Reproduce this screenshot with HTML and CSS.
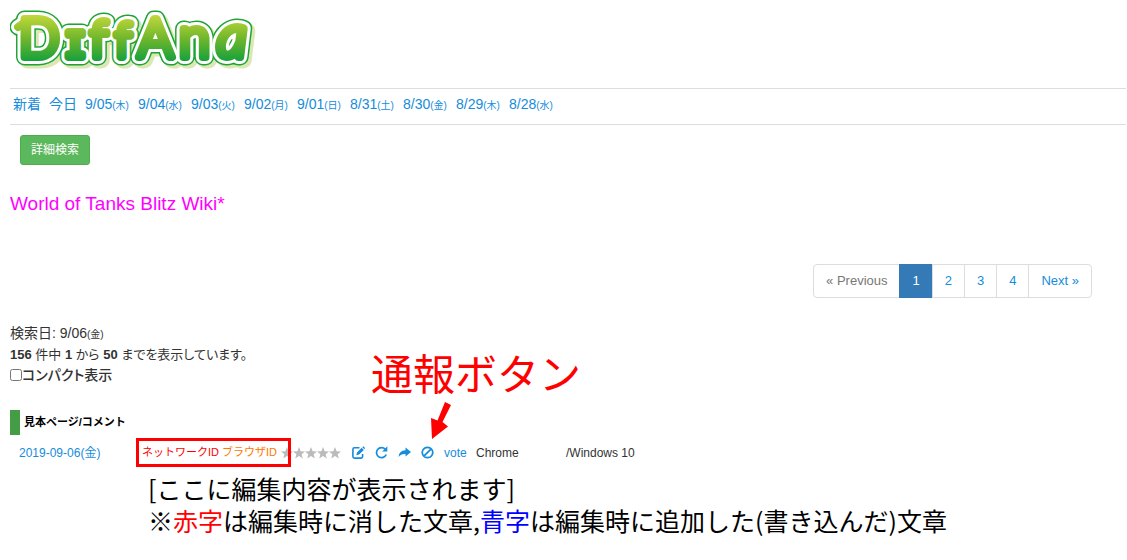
FILE: index.html
```html
<!DOCTYPE html>
<html lang="ja">
<head>
    <meta charset="UTF-8">
    <meta name="viewport" content="width=device-width, initial-scale=1.0">
    <title>DiffAna</title>
    <link rel="stylesheet" href="styles.css">
</head>
<body>
    <a class="logo" href="#">
        <svg width="262" height="70" viewBox="0 0 262 70" role="img" aria-label="DiffAna">
            <defs>
                <linearGradient id="leaf" gradientUnits="userSpaceOnUse" x1="0" y1="16" x2="0" y2="62">
                    <stop offset="0" stop-color="#bfd63a"/>
                    <stop offset="0.5" stop-color="#6fb62c"/>
                    <stop offset="1" stop-color="#12a03c"/>
                </linearGradient>
                <g id="word">
                    <path class="logo-flag" d="M18 27Q25 21 36 21 25 21 18 27z"/>
                    <text class="logo-text" y="57"><tspan class="l-d" x="19">D</tspan><tspan class="l-i" x="65">I</tspan><tspan class="l-f" x="90">f</tspan><tspan class="l-f2" x="115">f</tspan><tspan class="l-a" x="138">A</tspan><tspan class="l-n" x="179">n</tspan><tspan class="l-s" x="217">a</tspan></text>
                </g>
            </defs>
            <use class="logo-shadow" href="#word" x="3" y="3"/>
            <use class="logo-edge" href="#word"/>
            <use class="logo-white" href="#word"/>
            <use class="logo-fill" href="#word"/>
        </svg>
    </a>

    <nav class="days">
        <a href="#">新着</a>
        <a href="#">今日</a>
        <a class="day" href="#">9/05<small>(木)</small></a>
        <a class="day" href="#">9/04<small>(水)</small></a>
        <a class="day" href="#">9/03<small>(火)</small></a>
        <a class="day" href="#">9/02<small>(月)</small></a>
        <a class="day" href="#">9/01<small>(日)</small></a>
        <a class="day" href="#">8/31<small>(土)</small></a>
        <a class="day" href="#">8/30<small>(金)</small></a>
        <a class="day" href="#">8/29<small>(木)</small></a>
        <a class="day" href="#">8/28<small>(水)</small></a>
    </nav>

    <button class="btn" type="button">詳細検索</button>

    <h1>World of Tanks Blitz Wiki*</h1>

    <ul class="pagination">
        <li class="disabled"><span>« Previous</span></li>
        <li class="active"><a href="#">1</a></li>
        <li><a href="#">2</a></li>
        <li><a href="#">3</a></li>
        <li><a href="#">4</a></li>
        <li><a href="#">Next »</a></li>
    </ul>

    <div class="summary">
        <div>検索日: 9/06<small>(金)</small></div>
        <div class="count"><b>156</b> 件中 <b>1</b> から <b>50</b> までを表示しています。</div>
        <div class="compact">
            <input type="checkbox" id="compact"><label for="compact">コンパクト表示</label>
        </div>
    </div>

    <h2>見本ページ/コメント</h2>

    <div class="entry">
        <a class="date" href="#">2019-09-06(金)</a>
        <span class="ids"><span class="net">ネットワークID</span> <span class="browser">ブラウザID</span></span>
        <span class="stars">
            <svg width="60" height="12" viewBox="0 0 60 12" fill="#bbb">
                <defs><path id="star" d="M6 0 7.600 4.200 12 4.400 8.600 7.200 9.800 11.500 6 9 2.200 11.500 3.400 7.200 0 4.400 4.400 4.200z"/></defs>
                <use href="#star"/>
                <use href="#star" x="12"/>
                <use href="#star" x="24"/>
                <use href="#star" x="36"/>
                <use href="#star" x="48"/>
            </svg>
        </span>
        <span class="tools">
            <a href="#" aria-label="編集">
                <svg width="13" height="13" viewBox="0 0 13 13"><path fill="none" stroke="currentColor" stroke-width="1.600" d="M7.500 1.800H2.500Q.9 1.800 .9 3.400V10.500Q.9 12.100 2.500 12.100H9Q10.600 12.100 10.600 10.500V8"/><path fill="currentColor" d="M4.300 9.300 5 6.500 9.700 1.800 11.800 3.900 7.100 8.600zM10.300 1.200 11.300.2 13 1.900 12.300 3.200z"/></svg>
            </a>
            <a href="#" aria-label="更新">
                <svg width="13" height="13" viewBox="0 0 13 13"><path fill="none" stroke="currentColor" stroke-width="1.700" d="M10.200 3.200A5 5 0 1 0 11.200 8.500"/><path fill="currentColor" d="M12.300.3V5.400H7.200z"/></svg>
            </a>
            <a href="#" aria-label="共有">
                <svg width="13" height="13" viewBox="0 0 13 13"><path fill="currentColor" d="M7.500 1.500 13 6 7.500 10.500V8Q3 7.600.5 11 .8 4.600 7.500 4.200z"/></svg>
            </a>
            <a href="#" aria-label="通報">
                <svg width="13" height="13" viewBox="0 0 13 13"><path fill="none" stroke="currentColor" stroke-width="1.700" d="M6.500 1.300a5.200 5.200 0 1 0 .01 0zM2.800 10.200 10.200 2.800"/></svg>
            </a>
        </span>
        <a class="vote" href="#">vote</a>
        <span class="agent">Chrome</span>
        <span class="os">/Windows 10</span>

        <div class="callout">
            通報ボタン
            <svg class="arrow" width="20" height="38" viewBox="0 0 20 38"><path fill="#f00" d="M14 0 20 3 11.500 20 17 24.500 1 37 0 16 6.500 18.500z"/></svg>
        </div>
    </div>

    <div class="note">
        <p>[ここに編集内容が表示されます]</p>
        <p>※<span class="removed">赤字</span>は編集時に消した文章,<span class="added">青字</span>は編集時に追加した(書き込んだ)文章</p>
    </div>
</body>
</html>
```

FILE: styles.css
```css
body {
    margin: 0 1px 0 10px;
    background: #fff;
    color: #333;
    font-family: "Liberation Sans", "Noto Sans CJK JP", sans-serif;
    font-size: 14px;
    line-height: 20px;
}
a {
    color: #158cdc;
    text-decoration: none;
}
small {
    font-size: 10px;
}
svg {
    display: block;
}

/* logo */
.logo {
    display: block;
    height: 88px;
    margin-left: -10px;
}
.logo-text {
    stroke-linejoin: round;
    stroke-linecap: round;
    font-family: Lato, sans-serif;
    font-weight: 300;
}
.l-d { font-size: 53px; }
.l-i { font-family: "DejaVu Sans Mono", monospace; font-size: 34px; }
.l-f { font-size: 52px; }
.l-f2 { font-size: 48px; }
.l-a { font-size: 53px; }
.l-n { font-size: 56px; }
.l-s { font-style: italic; font-size: 60px; }
.logo-flag { stroke-linejoin: round; }
.logo-shadow { fill: #dbe8b4; stroke: #dbe8b4; stroke-width: 17px; }
.logo-edge { fill: #1fa336; stroke: #1fa336; stroke-width: 17px; }
.logo-white { fill: #fff; stroke: #fff; stroke-width: 14px; }
.logo-fill { fill: url(#leaf); stroke: url(#leaf); stroke-width: 8px; }

/* day links */
.days {
    display: flex;
    gap: 8px;
    height: 35px;
    padding-left: 3px;
    border-top: 1px solid #ddd;
    border-bottom: 1px solid #ddd;
    line-height: 30px;
}
.day {
    width: 45px;
    white-space: nowrap;
}

.btn {
    display: block;
    margin: 10px 0 0 10px;
    padding: 5px 10px;
    border: 1px solid #4cae4c;
    border-radius: 3px;
    background: #5cb85c;
    color: #fff;
    font-family: inherit;
    font-size: 12px;
    line-height: 18px;
    cursor: pointer;
}

h1 {
    margin: 28px 0 0;
    color: #f0f;
    font-size: 19px;
    font-weight: 500;
    line-height: 22px;
}

/* pagination */
.pagination {
    display: flex;
    justify-content: flex-end;
    margin: 49px 34px 0 0;
    padding: 0;
    list-style: none;
    font-size: 13px;
}
.pagination a, .pagination span {
    display: block;
    margin-left: -1px;
    padding: 6px 12px;
    border: 1px solid #ddd;
}
.pagination .disabled span {
    border-radius: 4px 0 0 4px;
    color: #777;
}
.pagination .active a {
    border-color: #337ab7;
    background: #337ab7;
    color: #fff;
}
.pagination li:last-child a {
    border-radius: 0 4px 4px 0;
}

/* search summary */
.summary {
    margin-top: 25px;
    font-feature-settings: "palt";
}
.summary .count {
    height: 20px;
    font-size: 13px;
}
.compact {
    display: flex;
    align-items: center;
    height: 20px;
    font-weight: 500;
}
.compact input {
    width: 12px;
    height: 12px;
    margin: 0;
}

h2 {
    margin: 25px 0 0;
    padding-left: 4px;
    border-left: 10px solid #449d44;
    color: #000;
    font-size: 11px;
    line-height: 25px;
}

/* one edit */
.entry {
    position: relative;
    display: flex;
    align-items: center;
    height: 29px;
    margin-top: 3px;
    padding-left: 9px;
    font-size: 12px;
    white-space: nowrap;
}
.date {
    width: 117px;
}
.ids {
    box-sizing: border-box;
    width: 155px;
    height: 29px;
    padding-left: 3px;
    border: 3px solid #f00;
    color: #f00;
    font-size: 11px;
    line-height: 23px;
}
.browser {
    color: #f70;
}
.stars {
    z-index: -1;
    margin-left: -10px;
}
.tools {
    display: flex;
    gap: 10px;
    margin-left: 11px;
}
.vote {
    width: 32px;
    margin-left: 10px;
}
.agent {
    width: 90px;
}

/* labels drawn over the list */
.callout {
    position: absolute;
    left: 361px;
    bottom: 27px;
    color: #f00;
    font-size: 42px;
    line-height: 46px;
    padding-bottom: 41px;
}
.arrow {
    position: absolute;
    left: 60px;
    bottom: 0;
}
.note {
    margin: 5px 0 0 138px;
    color: #000;
    font-family: "Noto Sans CJK JP", sans-serif;
    font-size: 25px;
    line-height: 32px;
}
.note p {
    margin: 0;
}
.removed {
    color: #f00;
}
.added {
    color: #00f;
}
```
